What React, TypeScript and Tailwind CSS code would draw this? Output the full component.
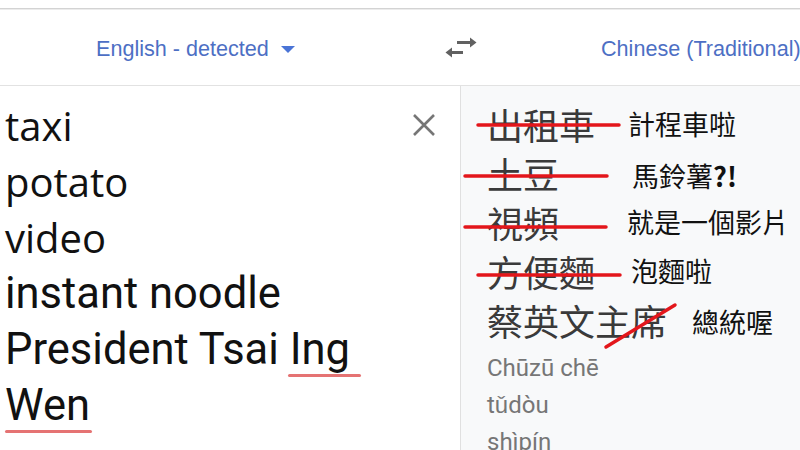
import React from "react";

const cjk = '"Noto Sans CJK TC", "Noto Sans", sans-serif';

function SwapIcon() {
  return (
    <svg width="32" height="24" viewBox="0 0 32 24" className="shrink-0">
      <g fill="#616161">
        <rect x="12" y="5" width="14" height="3" />
        <path d="M25 1.5 L31.5 6.5 L25 11.5 Z" />
        <rect x="6" y="15" width="12" height="3" />
        <path d="M7 11.5 L0.5 16.5 L7 21.5 Z" />
      </g>
    </svg>
  );
}

function ClearIcon() {
  return (
    <svg width="24" height="24" viewBox="0 0 24 24">
      <path d="M2 2 L22 22 M22 2 L2 22" stroke="#767676" strokeWidth="2.6" fill="none" />
    </svg>
  );
}

type Row = { word: string; note: React.ReactNode; gap: string };

const rows: Row[] = [
  { word: "出租車", note: "計程車啦", gap: "ml-[33px]" },
  {
    word: "土豆",
    note: (
      <span className="inline-block translate-y-[3px]">
        馬鈴薯<b className="font-bold">?!</b>
      </span>
    ),
    gap: "ml-[73px]",
  },
  { word: "視頻", note: "就是一個影片", gap: "ml-[68px]" },
  { word: "方便麵", note: "泡麵啦", gap: "ml-[36px]" },
  {
    word: "蔡英文主席",
    note: <span className="inline-block translate-y-[2px]">總統喔</span>,
    gap: "ml-[25px]",
  },
];

export default function App() {
  return (
    <div className="w-[800px] h-[450px] overflow-hidden bg-white flex flex-col">
      <div className="h-[8px] shrink-0" />
      <div className="h-px bg-[#d3d3d3] shrink-0" />
      <div className="h-px bg-[#ececec] shrink-0" />

      {/* language bar */}
      <div
        className="h-[76px] shrink-0 flex items-center pt-[3px] border-b border-[#e2e2e2] whitespace-nowrap"
        style={{ fontFamily: '"Liberation Sans", Arial, sans-serif' }}
      >
        <div className="w-[445px] shrink-0 pl-[96px] flex items-center">
          <span className="text-[21.6px] text-[#4d6fc4]">English - detected</span>
          <svg width="14" height="8" viewBox="0 0 14 8" className="ml-[12px] mt-[2px]">
            <path d="M0 0 L14 0 L7 7 Z" fill="#4a74d6" />
          </svg>
        </div>
        <div className="-mt-[3px]">
          <SwapIcon />
        </div>
        <span className="ml-[124px] text-[21.6px] text-[#4d6fc4]">Chinese (Traditional)</span>
      </div>

      {/* panels */}
      <div className="flex flex-1 min-h-0">
        {/* source text */}
        <div className="w-[460px] shrink-0 flex justify-between pl-[5px] pt-[12px] pr-[24px]">
          <div className="text-[#111] whitespace-nowrap">
            <div style={{ fontFamily: '"Open Sans", sans-serif' }} className="text-[40px] leading-[56px]">
              <div>taxi</div>
              <div>potato</div>
              <div>video</div>
            </div>
            <div style={{ fontFamily: "Roboto, sans-serif" }} className="text-[43.5px] leading-[56px]">
              <div>instant noodle</div>
              <div>
                President Tsai{" "}
                <span className="relative">
                  Ing
                  <span className="absolute top-full -mt-[1px] left-[-2px] right-[-11px] h-[3px] rounded-full bg-[#e57373]" />
                </span>
              </div>
              <div>
                <span className="relative">
                  Wen
                  <span className="absolute top-full -mt-[1px] left-0 right-[-2px] h-[3px] rounded-full bg-[#e57373]" />
                </span>
              </div>
            </div>
          </div>
          <div className="mt-[15px]">
            <ClearIcon />
          </div>
        </div>

        {/* translation */}
        <div className="flex-1 relative border-l border-[#e0e0e0] bg-[#f8f9fa] pl-[26px] pt-[14px] whitespace-nowrap">
          {rows.map((r) => (
            <div key={r.word} className="flex items-center" style={{ fontFamily: cjk }}>
              <span className="text-[36px] leading-[49px] text-[#3a3a3a]">{r.word}</span>
              <span className={`${r.gap} text-[27px] text-[#111]`}>{r.note}</span>
            </div>
          ))}
          <div
            className="mt-[5px] text-[24px] leading-[37px] text-[#767676]"
            style={{ fontFamily: "Roboto, sans-serif" }}
          >
            <div>Chūzū chē</div>
            <div>tǔdòu</div>
            <div>shìpín</div>
          </div>

          {/* red strike-through marks */}
          <svg className="absolute inset-0 pointer-events-none" width="339" height="364">
            <g stroke="#e3161b" strokeWidth="3.5" strokeLinecap="round">
              <line x1="17" y1="39" x2="158" y2="39" />
              <line x1="4" y1="90" x2="146" y2="90" />
              <line x1="4" y1="141" x2="145" y2="141" />
              <line x1="17" y1="189" x2="159" y2="189" />
              <line x1="145" y1="261" x2="214" y2="219" />
            </g>
          </svg>
        </div>
      </div>
    </div>
  );
}
